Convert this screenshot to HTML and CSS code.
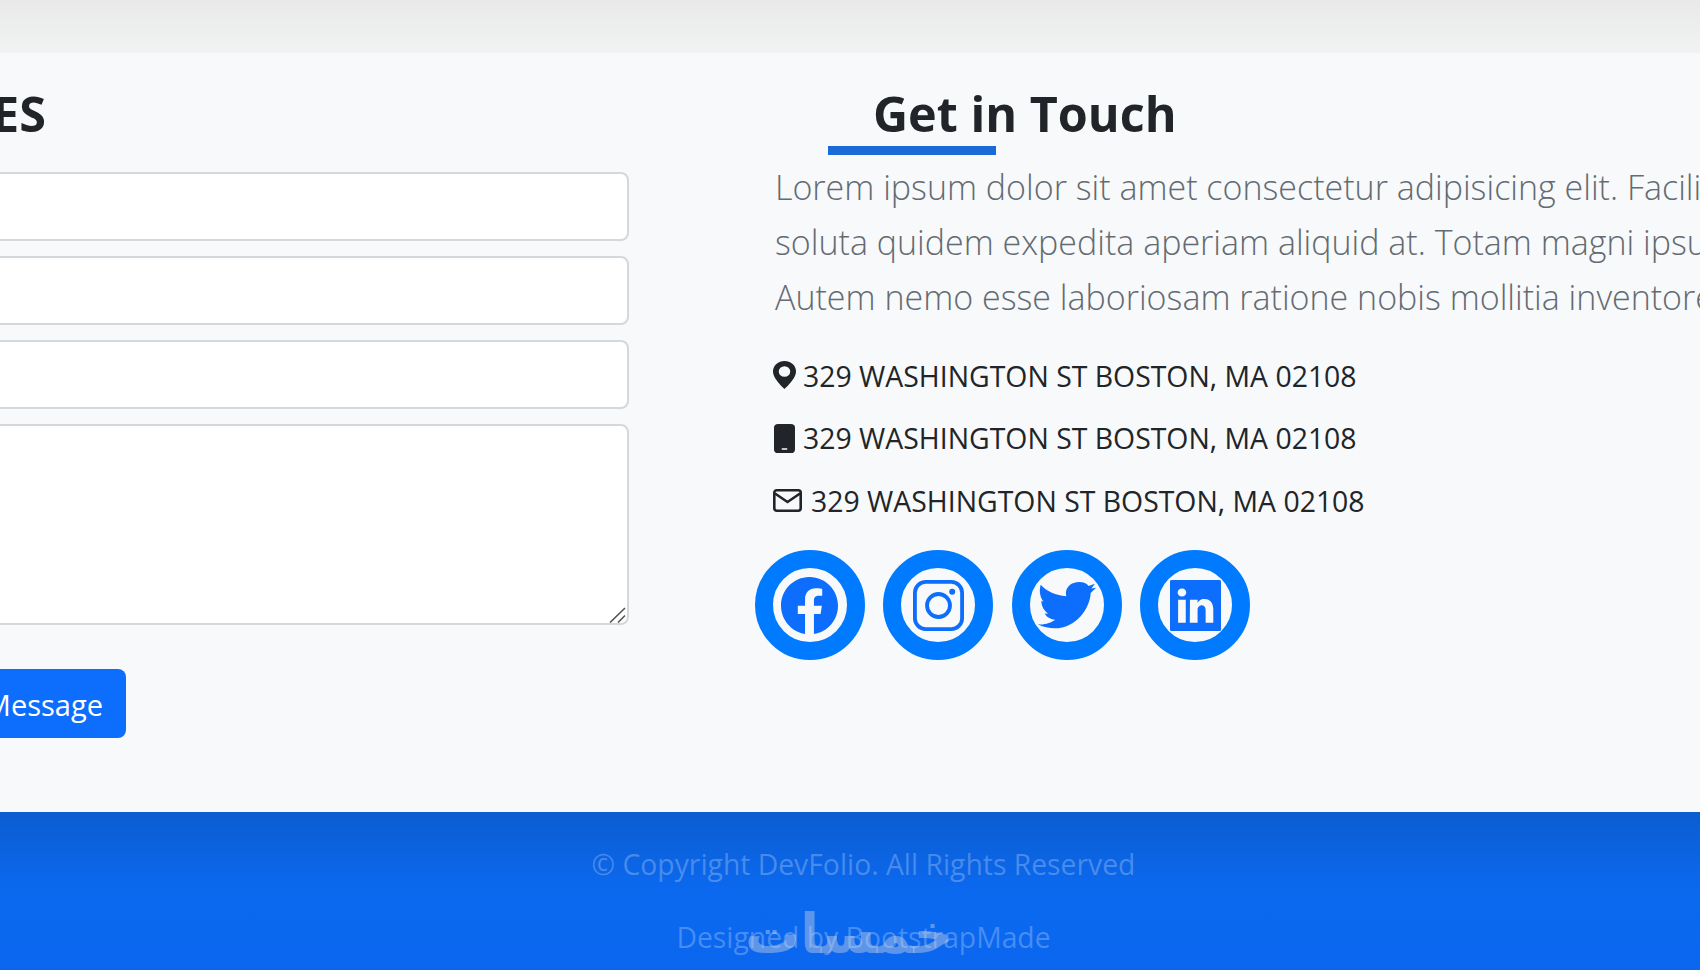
FILE: index.html
```html
<!DOCTYPE html>
<html lang="en">
<head>
    <meta charset="UTF-8">
    <meta name="viewport" content="width=device-width, initial-scale=1.0">
    <title>DevFolio</title>
    <link rel="stylesheet" href="styles.css">
</head>
<body>

    <div class="top-strip"></div>

    <section class="contact">
        <form class="contact-form">
            <h2 class="form-title">MESSAGES</h2>
            <input type="text" class="field">
            <input type="text" class="field">
            <input type="text" class="field">
            <div class="area-wrap">
                <textarea class="field field-area"></textarea>
                <svg class="area-grip" viewBox="0 0 17 16"><path d="M16 1 1 15.5M16 8.5 9 15.5"/></svg>
            </div>
            <div class="form-actions">
                <button type="button" class="send-btn">Send Message</button>
            </div>
        </form>

        <div class="contact-info">
            <h2 class="info-title">Get in Touch</h2>
            <p class="info-text">
                <span>Lorem ipsum dolor sit amet consectetur adipisicing elit. Facilis dolorum dolorem soluta</span>
                <span>soluta quidem expedita aperiam aliquid at. Totam magni ipsum suscipit amet dolorem</span>
                <span>Autem nemo esse laboriosam ratione nobis mollitia inventore adipisci ipsam</span>
            </p>

            <ul class="info-list">
                <li>
                    <svg class="info-icon icon-pin" viewBox="2 0 12 16" preserveAspectRatio="none"><path d="M8 16s6-5.686 6-10A6 6 0 0 0 2 6c0 4.314 6 10 6 10zm0-7a3 3 0 1 1 0-6 3 3 0 0 1 0 6z"/></svg>
                    <span>329 WASHINGTON ST BOSTON, MA 02108</span>
                </li>
                <li>
                    <svg class="info-icon icon-phone" viewBox="3 0 10 16" preserveAspectRatio="none"><path fill-rule="evenodd" d="M3 2a2 2 0 0 1 2-2h6a2 2 0 0 1 2 2v12a2 2 0 0 1-2 2H5a2 2 0 0 1-2-2V2zm4 11.4a.4.4 0 0 0 0 .8h2a.4.4 0 0 0 0-.8H7z"/></svg>
                    <span>329 WASHINGTON ST BOSTON, MA 02108</span>
                </li>
                <li>
                    <svg class="info-icon icon-mail" viewBox="0 0 29 23"><rect x="1.3" y="1.3" width="26.4" height="20.4" rx="2.4"/><path d="M2 4.5 14.5 13 27 4.5"/></svg>
                    <span>329 WASHINGTON ST BOSTON, MA 02108</span>
                </li>
            </ul>

            <div class="socials">
                <a class="social" href="#">
                    <svg class="social-fb" viewBox="0 0 16 16"><path d="M16 8.049c0-4.446-3.582-8.05-8-8.05C3.58 0-.002 3.603-.002 8.05c0 4.017 2.926 7.347 6.75 7.951v-5.625h-2.03V8.05H6.75V6.275c0-2.017 1.195-3.131 3.022-3.131.876 0 1.791.157 1.791.157v1.98h-1.009c-.993 0-1.303.621-1.303 1.258v1.51h2.218l-.354 2.326H9.25V16c3.824-.604 6.75-3.934 6.75-7.951z"/></svg>
                </a>
                <a class="social" href="#">
                    <svg class="social-ig" viewBox="0 0 16 16"><rect x=".6" y=".6" width="14.8" height="14.8" rx="3.4" class="ig-line"/><circle cx="8" cy="8" r="3.6" class="ig-line"/><circle cx="12.3" cy="3.7" r=".95"/></svg>
                </a>
                <a class="social" href="#">
                    <svg class="social-tw" viewBox="115 110 175 142"><path d="M240 110C252 110 262 115 268 122L287 115 276 130 290 127 274 143C272 190 230 250 165 250 150 250 130 247 115 238 135 240 155 233 167 224 150 222 140 214 135 205L145 206C135 198 125 185 125 167L132 170C120 155 118 135 123 118 140 138 170 150 200 153 195 125 215 110 240 110Z"/></svg>
                </a>
                <a class="social" href="#">
                    <svg class="social-in" viewBox="0 0 16 16"><path d="M0 .5C0 .2.2 0 .5 0h15c.3 0 .5.2.5.5v15c0 .3-.2.5-.5.5H.5c-.3 0-.5-.2-.5-.5V.5zm4.943 12.894V6.169H2.542v7.225h2.401zm-1.2-8.212c.837 0 1.358-.554 1.358-1.248-.015-.709-.52-1.248-1.342-1.248-.822 0-1.359.54-1.359 1.248 0 .694.521 1.248 1.327 1.248h.016zm4.908 8.212V9.359c0-.216.016-.432.08-.586.173-.431.568-.878 1.232-.878.869 0 1.216.662 1.216 1.634v3.865h2.401V9.25c0-2.22-1.184-3.252-2.764-3.252-1.274 0-1.845.7-2.165 1.193v.025h-.016a5.54 5.54 0 0 1 .016-.025V6.169h-2.4c.03.678 0 7.225 0 7.225h2.4z"/></svg>
                </a>
            </div>
        </div>
    </section>

    <footer class="site-footer">
        <p class="copyright">© Copyright DevFolio. All Rights Reserved</p>
        <p class="credits">Designed by BootstrapMade</p>
        <span class="watermark" lang="ar" dir="rtl">خمسات</span>
    </footer>

</body>
</html>
```

FILE: styles.css
```css
* {
    box-sizing: border-box;
}
html, body {
    height: 100%;
}
body {
    margin: 0;
    width: 1700px;
    height: 970px;
    overflow: hidden;
    font-family: "Open Sans", "Noto Sans", sans-serif;
    color: #212529;
    background: #f8f9fa;
    display: flex;
    flex-direction: column;
}
.top-strip {
    height: 53px;
    background: linear-gradient(#e9e9e9, #f1f2f2);
}

/* two columns, the form runs off the left edge */
.contact {
    height: 759px;
    background: #f8f9fa;
    display: flex;
}
.contact-form {
    flex: none;
    width: 1029px;
    margin-left: -400px;
    display: flex;
    flex-direction: column;
}
.form-title {
    margin: 30px 0 0;
    padding-right: 583px;
    height: 89px;
    text-align: right;
    font-size: 48.5px;
    line-height: 60px;
    font-weight: 700;
}
.field {
    display: block;
    width: 100%;
    height: 69px;
    margin-bottom: 15px;
    background: #fff;
    border: 2px solid #d3d8dd;
    border-radius: 8px;
    outline: none;
}
.area-wrap {
    position: relative;
    height: 201px;
    margin-bottom: 44px;
}
.field-area {
    height: 100%;
    margin: 0;
    resize: none;
}
.area-grip {
    position: absolute;
    right: 3px;
    bottom: 2px;
    width: 17px;
    height: 16px;
    fill: none;
    stroke: #555;
    stroke-width: 1.6;
}
.form-actions {
    display: flex;
    justify-content: flex-end;
    padding-right: 503px;
}
.send-btn {
    width: 300px;
    height: 69px;
    padding: 2px 23px 0 0;
    text-align: right;
    background: #0d6efd;
    color: #fff;
    border: none;
    border-radius: 8px;
    font-family: inherit;
    font-size: 29px;
}

.contact-info {
    flex: none;
    width: 925px;
    margin-left: 146px;
}
.info-title {
    position: relative;
    margin: 30px 0 0 53px;
    padding-left: 45px;
    height: 72px;
    font-size: 48.5px;
    line-height: 60px;
    font-weight: 700;
    white-space: nowrap;
}
.info-title::after {
    content: "";
    position: absolute;
    left: 0;
    bottom: 0;
    width: 168px;
    height: 9px;
    background: #1a6bd8;
}
.info-text {
    margin: 5px 0 19.5px;
    font-size: 34px;
    line-height: 55px;
    font-weight: 300;
    color: #636b73;
    white-space: nowrap;
}
.info-text span {
    display: block;
}
.info-list {
    list-style: none;
    margin: 0;
    padding: 0;
}
.info-list li {
    display: flex;
    align-items: center;
    gap: 7px;
    height: 62.5px;
    font-size: 28.4px;
    white-space: nowrap;
}
.info-icon {
    flex: none;
    fill: #212529;
    margin-left: -2px;
}
.icon-pin {
    width: 23px;
    height: 28px;
    margin-top: -2px;
}
.icon-phone {
    width: 21px;
    height: 29px;
    margin-left: -1px;
    margin-right: 1px;
}
.icon-mail {
    width: 29px;
    height: 23px;
    margin-right: 2px;
    fill: none;
    stroke: #212529;
    stroke-width: 2.6;
}
.socials {
    display: flex;
    gap: 18.5px;
    margin: 18px 0 0 -20.5px;
}
.social {
    flex: none;
    width: 110px;
    height: 110px;
    border: 18px solid #007bff;
    border-radius: 50%;
    display: flex;
    align-items: center;
    justify-content: center;
}
.social svg {
    fill: #0d6efd;
}
.social .ig-line {
    fill: none;
    stroke: #0d6efd;
    stroke-width: 1.2;
}
.social-fb {
    width: 57px;
    height: 57px;
}
.social-ig {
    width: 51px;
    height: 51px;
}
.social-tw {
    width: 58px;
    height: 47px;
}
.social-in {
    width: 51px;
    height: 51px;
}

.site-footer {
    position: relative;
    flex: 1;
    text-align: center;
    background: linear-gradient(#0b5dd0, #0b69f0 50%, #0a66ee);
    color: rgba(255, 255, 255, 0.25);
    font-size: 28.3px;
    padding-left: 27px;
}
.site-footer p {
    margin: 0;
}
.copyright {
    padding-top: 31px;
    line-height: 42px;
}
.credits {
    padding-top: 31px;
    line-height: 42px;
}
.watermark {
    position: absolute;
    left: 745px;
    top: 82px;
    font-family: "DejaVu Sans", sans-serif;
    font-size: 55px;
    line-height: 80px;
    font-weight: 700;
    color: rgba(225, 225, 225, 0.38);
}
```
